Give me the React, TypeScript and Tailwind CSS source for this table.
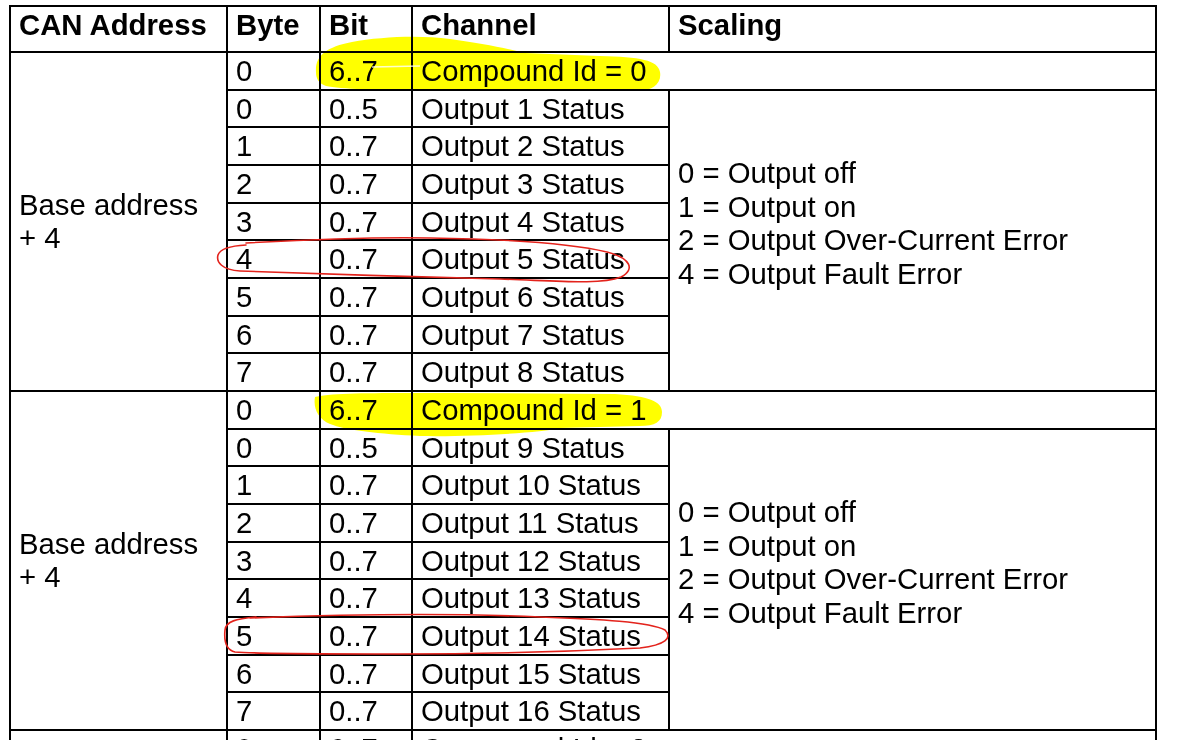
import { FunctionComponent } from "react";

type CellProps = {
    className?: string
    children?: React.ReactNode
}

const Cell: FunctionComponent<CellProps> = ({ className = "", children }) => {
    return (
        <div className={"bg-white flex flex-col justify-center pl-[8px] whitespace-nowrap " + className}>
            {children}
        </div>
    )
}

const HeadCell: FunctionComponent<CellProps> = ({ className = "", children }) => {
    return (
        <div className={"bg-white pl-[8px] pt-[1px] font-bold whitespace-nowrap " + className}>
            {children}
        </div>
    )
}

const scaling = ["0 = Output off", "1 = Output on", "2 = Output Over-Current Error", "4 = Output Fault Error"]

// partial: only the compound id row is on screen (the rest runs past the bottom edge)
const Group: FunctionComponent<{ id: number, partial?: boolean }> = ({ id, partial }) => {
    const rows = partial ? [] : [0, 1, 2, 3, 4, 5, 6, 7]
    return (
        <>
            <Cell className="row-span-9">
                {!partial && (
                    <>
                        <div>Base address</div>
                        <div>+ 4</div>
                    </>
                )}
            </Cell>
            <Cell>0</Cell>
            <Cell className="pl-[7px]">6..7</Cell>
            <Cell className="col-span-2">Compound Id = {id}</Cell>
            {rows.map((r) => (
                <div key={r} className="contents">
                    <Cell>{r}</Cell>
                    <Cell className="pl-[7px]">{r === 0 ? "0..5" : "0..7"}</Cell>
                    <Cell>Output {id * 8 + r + 1} Status</Cell>
                    {r === 0 && (
                        <Cell className="row-span-8">
                            {scaling.map((s) => (
                                <div key={s}>{s}</div>
                            ))}
                            <div>&nbsp;</div>
                        </Cell>
                    )}
                </div>
            ))}
        </>
    )
}

// pen marks drawn over the scanned table
const Markup: FunctionComponent = () => {
    return (
        <svg className="absolute left-0 top-0 pointer-events-none" width="1189" height="740" viewBox="0 0 1189 740">
            <g className="mix-blend-multiply" fill="#ffff00">
                <path d="M316,72 C315,56 326,47 352,42 C380,37 418,35 450,39 C480,43 505,48 525,53 L600,56 C640,57 658,60 660,72 C662,84 652,90 640,91 L420,91 C380,90 340,89 326,86 C318,83 316,78 316,72 Z" />
                <path d="M315,397 C330,392 400,393 450,393 L615,394 C650,396 662,402 662,412 C662,422 655,426 640,426 L560,428 C540,433 470,437 420,436 C380,434 345,430 330,424 C318,419 313,408 315,397 Z" />
            </g>
            <path d="M372,67 L420,66" stroke="#ffffff" strokeWidth="1.5" opacity="0.8" />
            <g fill="none" stroke="#e3231c" strokeWidth="1.6" strokeLinecap="round">
                <path d="M246,243 C300,240 380,237 430,238 C500,239 570,243 607,252 C630,258 636,269 621,277 C600,285 560,281 500,279 C420,277 320,274 240,271 C222,270 216,262 218,255 C220,249 228,246 246,245" />
                <path d="M250,618 C330,615 450,613 540,617 C600,619 650,622 665,630 C673,638 665,645 640,648 C580,651 480,654 400,654 C320,654 260,654 235,652 C226,650 224,640 225,630 C226,621 236,619 256,617" />
            </g>
        </svg>
    )
}

export default function App() {
    return (
        <div className="relative w-[1189px] h-[740px] overflow-hidden bg-white text-black font-['Liberation_Sans',Arial,sans-serif] text-[29.3px] leading-[33.6px]">
            <div className="ml-[9px] mt-[5px] w-fit bg-black p-[2px] grid gap-[2px] grid-cols-[215px_91px_90px_255px_485px] grid-rows-[44px_repeat(27,35.67px)]">
                <HeadCell>CAN Address</HeadCell>
                <HeadCell>Byte</HeadCell>
                <HeadCell className="pl-[7px]">Bit</HeadCell>
                <HeadCell>Channel</HeadCell>
                <HeadCell>Scaling</HeadCell>
                <Group id={0} />
                <Group id={1} />
                <Group id={2} partial />
            </div>
            <Markup />
        </div>
    )
}
